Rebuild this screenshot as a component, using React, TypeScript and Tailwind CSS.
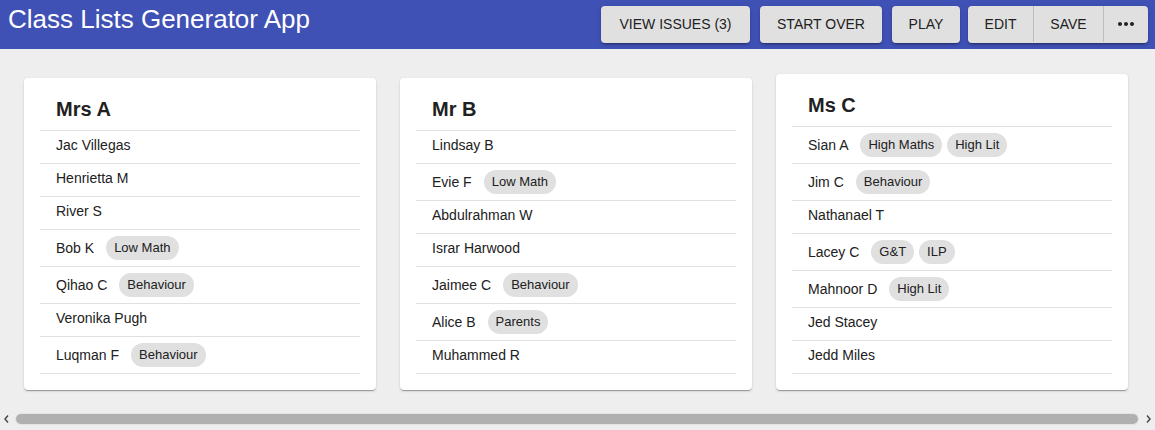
import React from "react";

type Student = { name: string; tags?: string[] };
type ClassList = { teacher: string; students: Student[] };

const classLists: ClassList[] = [
  {
    teacher: "Mrs A",
    students: [
      { name: "Jac Villegas" },
      { name: "Henrietta M" },
      { name: "River S" },
      { name: "Bob K", tags: ["Low Math"] },
      { name: "Qihao C", tags: ["Behaviour"] },
      { name: "Veronika Pugh" },
      { name: "Luqman F", tags: ["Behaviour"] },
    ],
  },
  {
    teacher: "Mr B",
    students: [
      { name: "Lindsay B" },
      { name: "Evie F", tags: ["Low Math"] },
      { name: "Abdulrahman W" },
      { name: "Israr Harwood" },
      { name: "Jaimee C", tags: ["Behaviour"] },
      { name: "Alice B", tags: ["Parents"] },
      { name: "Muhammed R" },
    ],
  },
  {
    teacher: "Ms C",
    students: [
      { name: "Sian A", tags: ["High Maths", "High Lit"] },
      { name: "Jim C", tags: ["Behaviour"] },
      { name: "Nathanael T" },
      { name: "Lacey C", tags: ["G&T", "ILP"] },
      { name: "Mahnoor D", tags: ["High Lit"] },
      { name: "Jed Stacey" },
      { name: "Jedd Miles" },
    ],
  },
];

const btnShadow =
  "shadow-[0_3px_1px_-2px_rgba(0,0,0,0.2),0_2px_2px_0_rgba(0,0,0,0.14),0_1px_5px_0_rgba(0,0,0,0.12)]";

function HeaderButton({ label, width }: { label: string; width: string }) {
  return (
    <button
      className={`${width} h-[37px] rounded-[4px] bg-[#e0e0e0] pb-[1px] text-[14px] leading-[24px] text-[#212121] ${btnShadow}`}
    >
      {label}
    </button>
  );
}

function MoreIcon() {
  return (
    <svg width="24" height="24" viewBox="0 0 24 24" fill="#212121">
      <path d="M6 10c-1.1 0-2 .9-2 2s.9 2 2 2 2-.9 2-2-.9-2-2-2zm12 0c-1.1 0-2 .9-2 2s.9 2 2 2 2-.9 2-2-.9-2-2-2zm-6 0c-1.1 0-2 .9-2 2s.9 2 2 2 2-.9 2-2-.9-2-2-2z" />
    </svg>
  );
}

function StudentRow({ name, tags }: Student) {
  if (!tags) {
    return (
      <li className="mx-4 border-b border-[#e0e0e0] px-4 pt-[4px] pb-[8px] text-[14px] leading-[20px] text-[#212121]">
        {name}
      </li>
    );
  }
  return (
    <li className="mx-4 flex items-center border-b border-[#e0e0e0] px-4 py-[6px] text-[14px] leading-[20px] text-[#212121]">
      <span>{name}</span>
      <div className="ml-3 flex gap-[5px]">
        {tags.map((tag) => (
          <span
            key={tag}
            className="flex h-[24px] items-center rounded-full bg-[#e0e0e0] px-2 text-[13px] text-[#212121]"
          >
            {tag}
          </span>
        ))}
      </div>
    </li>
  );
}

function ClassCard({ teacher, students }: ClassList) {
  return (
    <div className="w-[352px] shrink-0 rounded-[4px] bg-white pb-4 shadow-[0_2px_1px_-1px_rgba(0,0,0,0.2),0_1px_1px_0_rgba(0,0,0,0.14),0_1px_3px_0_rgba(0,0,0,0.12)]">
      <div className="mx-4 border-b border-[#e0e0e0] px-4 pt-[19px] pb-[9px] text-[20px] leading-[24px] font-bold text-[#212121]">
        {teacher}
      </div>
      <ul>
        {students.map((s) => (
          <StudentRow key={s.name} {...s} />
        ))}
      </ul>
    </div>
  );
}

export default function App() {
  return (
    <div
      className="min-h-[430px] bg-[#eeeeee]"
      style={{ fontFamily: '"Liberation Sans", Arial, sans-serif' }}
    >
      <header className="flex h-[49px] items-center justify-between bg-[#3f51b5] pr-[7px] pl-[8px]">
        <h1 className="self-start pt-[4px] text-[26px] leading-[30px] text-white">
          Class Lists Generator App
        </h1>
        <div className="flex items-center">
          <HeaderButton label="VIEW ISSUES (3)" width="w-[149px]" />
          <div className="ml-[10px]">
            <HeaderButton label="START OVER" width="w-[122px]" />
          </div>
          <div className="ml-[10px]">
            <HeaderButton label="PLAY" width="w-[68px]" />
          </div>
          <div
            className={`ml-[8px] flex h-[37px] overflow-hidden rounded-[4px] bg-[#e0e0e0] pb-[1px] text-[14px] text-[#212121] ${btnShadow}`}
          >
            <button className="w-[66px] border-r border-[#bdbdbd]">EDIT</button>
            <button className="w-[70px] border-r border-[#bdbdbd]">SAVE</button>
            <button className="flex w-[44px] items-center justify-center">
              <MoreIcon />
            </button>
          </div>
        </div>
      </header>

      <main className="flex items-end gap-[24px] pt-[25px] pl-[24px]">
        {classLists.map((list) => (
          <ClassCard key={list.teacher} {...list} />
        ))}
      </main>

      <div className="mt-[19px] flex h-[20px] items-center">
        <svg width="16" height="20" viewBox="0 0 16 20" className="shrink-0">
          <polyline points="8,6.5 5,10 8,13.5" fill="none" stroke="#444" strokeWidth="1.4" />
        </svg>
        <div className="h-[10px] flex-1 rounded-full bg-[#b0b0b0] ring-1 ring-[#e4e4e4]" />
        <svg width="17" height="20" viewBox="0 0 17 20" className="shrink-0">
          <polyline points="9,6.5 12,10 9,13.5" fill="none" stroke="#444" strokeWidth="1.4" />
        </svg>
      </div>
    </div>
  );
}
